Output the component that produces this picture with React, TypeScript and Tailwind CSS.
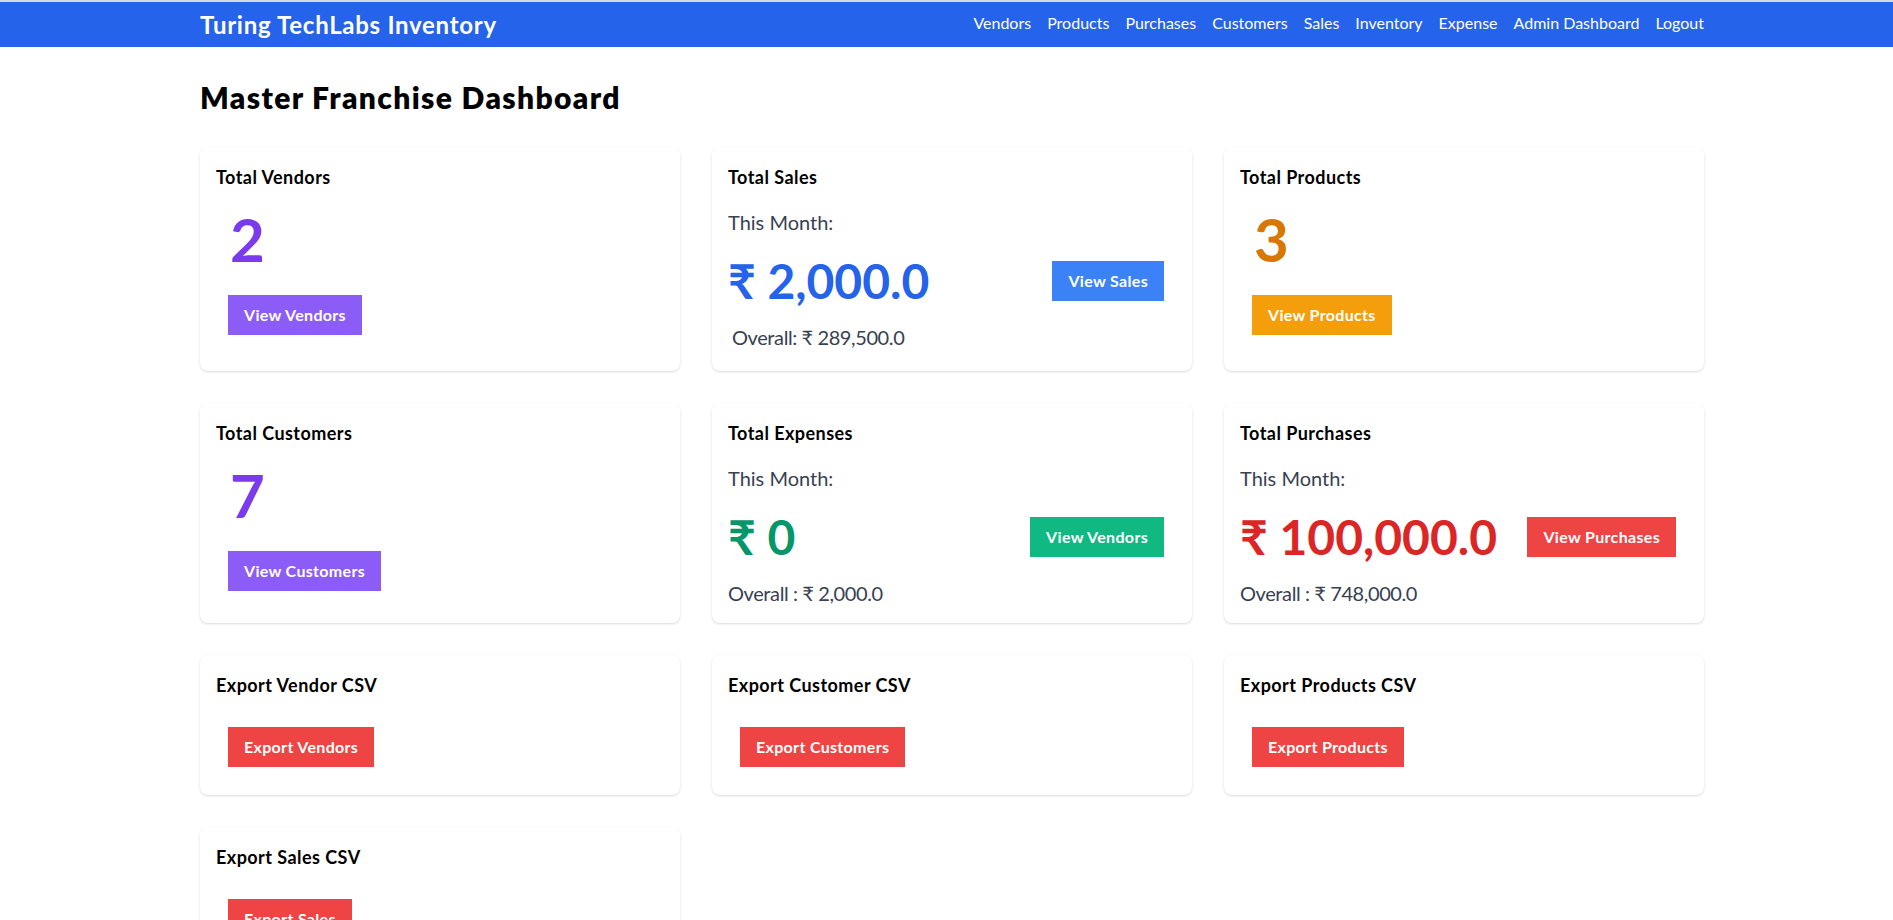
import React from "react";

const navLinks = ["Vendors", "Products", "Purchases", "Customers", "Sales", "Inventory", "Expense", "Admin Dashboard", "Logout"];

function Card({ children, extra = "" }: { children: React.ReactNode; extra?: string }) {
  return <div className={`bg-white rounded-lg shadow-[0_1px_3px_0_rgba(0,0,0,0.1),0_1px_2px_0_rgba(0,0,0,0.06)] p-4 ${extra}`}>{children}</div>;
}

function CardTitle({ children }: { children: React.ReactNode }) {
  return <h2 className="text-lg leading-7 font-bold tracking-[0.025em] text-black">{children}</h2>;
}

function Btn({ label, color, extra = "" }: { label: string; color: string; extra?: string }) {
  return (
    <button className={`${color} text-white font-bold text-base leading-6 tracking-[0.02em] px-4 py-2 ${extra}`}>
      {label}
    </button>
  );
}

function CountCard({ title, value, valueColor, label, btnColor }: { title: string; value: string; valueColor: string; label: string; btnColor: string }) {
  return (
    <Card>
      <CardTitle>{title}</CardTitle>
      <p className={`mt-[18px] ml-[14px] text-6xl leading-none font-bold ${valueColor}`}>{value}</p>
      <Btn label={label} color={btnColor} extra="ml-3 mt-[26px]" />
    </Card>
  );
}

function MoneyCard({ title, value, valueColor, label, btnColor, overall, overallExtra = "" }: { title: string; value: string; valueColor: string; label: string; btnColor: string; overall: string; overallExtra?: string }) {
  return (
    <Card>
      <CardTitle>{title}</CardTitle>
      <p className="mt-[17px] text-xl leading-7 text-[#374151]">This Month:</p>
      <div className="mt-[13px] flex items-center justify-between">
        <p className={`text-5xl leading-none font-bold ${valueColor}`}>{value}</p>
        <Btn label={label} color={btnColor} extra="m-3" />
      </div>
      <p className={`mt-[10px] text-xl leading-7 tracking-[-0.02em] text-[#374151] ${overallExtra}`}>{overall}</p>
    </Card>
  );
}

function ExportCard({ title, label }: { title: string; label: string }) {
  return (
    <Card>
      <CardTitle>{title}</CardTitle>
      <Btn label={label} color="bg-[#ef4444]" extra="ml-3 mt-[28px] mb-3" />
    </Card>
  );
}

export default function App() {
  return (
    <div className="min-h-screen bg-white font-[Lato,'Noto_Sans',sans-serif] text-black">
      <div className="h-[2px] bg-[#d6dbe3]" />

      {/* Top navbar */}
      <nav className="bg-[#2563eb] h-[45px]">
        <div className="ml-[200px] w-[1504px] h-full flex items-center justify-between">
          <span className="text-white text-2xl leading-8 font-bold tracking-[0.03em]">Turing TechLabs Inventory</span>
          <div className="flex items-center gap-4 pb-[3px]">
            {navLinks.map((l) => (
              <a key={l} href="#" className="text-white text-base leading-6">
                {l}
              </a>
            ))}
          </div>
        </div>
      </nav>

      <main className="ml-[200px] w-[1504px]">
        <h1 className="mt-8 mb-8 text-3xl leading-9 font-extrabold tracking-[0.045em]">Master Franchise Dashboard</h1>

        <div className="grid grid-cols-3 gap-8">
          <CountCard title="Total Vendors" value="2" valueColor="text-[#7c3aed]" label="View Vendors" btnColor="bg-[#8b5cf6]" />
          <MoneyCard
            title="Total Sales"
            value="₹ 2,000.0"
            valueColor="text-[#2563eb]"
            label="View Sales"
            btnColor="bg-[#3b82f6]"
            overall="Overall: ₹ 289,500.0"
            overallExtra="ml-1 mb-1"
          />
          <CountCard title="Total Products" value="3" valueColor="text-[#d97706]" label="View Products" btnColor="bg-[#f59e0b]" />

          <CountCard title="Total Customers" value="7" valueColor="text-[#7c3aed]" label="View Customers" btnColor="bg-[#8b5cf6]" />
          <MoneyCard
            title="Total Expenses"
            value="₹ 0"
            valueColor="text-[#059669]"
            label="View Vendors"
            btnColor="bg-[#10b981]"
            overall="Overall : ₹ 2,000.0"
          />
          <MoneyCard
            title="Total Purchases"
            value="₹ 100,000.0"
            valueColor="text-[#dc2626]"
            label="View Purchases"
            btnColor="bg-[#ef4444]"
            overall="Overall : ₹ 748,000.0"
          />

          <ExportCard title="Export Vendor CSV" label="Export Vendors" />
          <ExportCard title="Export Customer CSV" label="Export Customers" />
          <ExportCard title="Export Products CSV" label="Export Products" />
          <ExportCard title="Export Sales CSV" label="Export Sales" />
        </div>
        <div className="h-8" />
      </main>
    </div>
  );
}
